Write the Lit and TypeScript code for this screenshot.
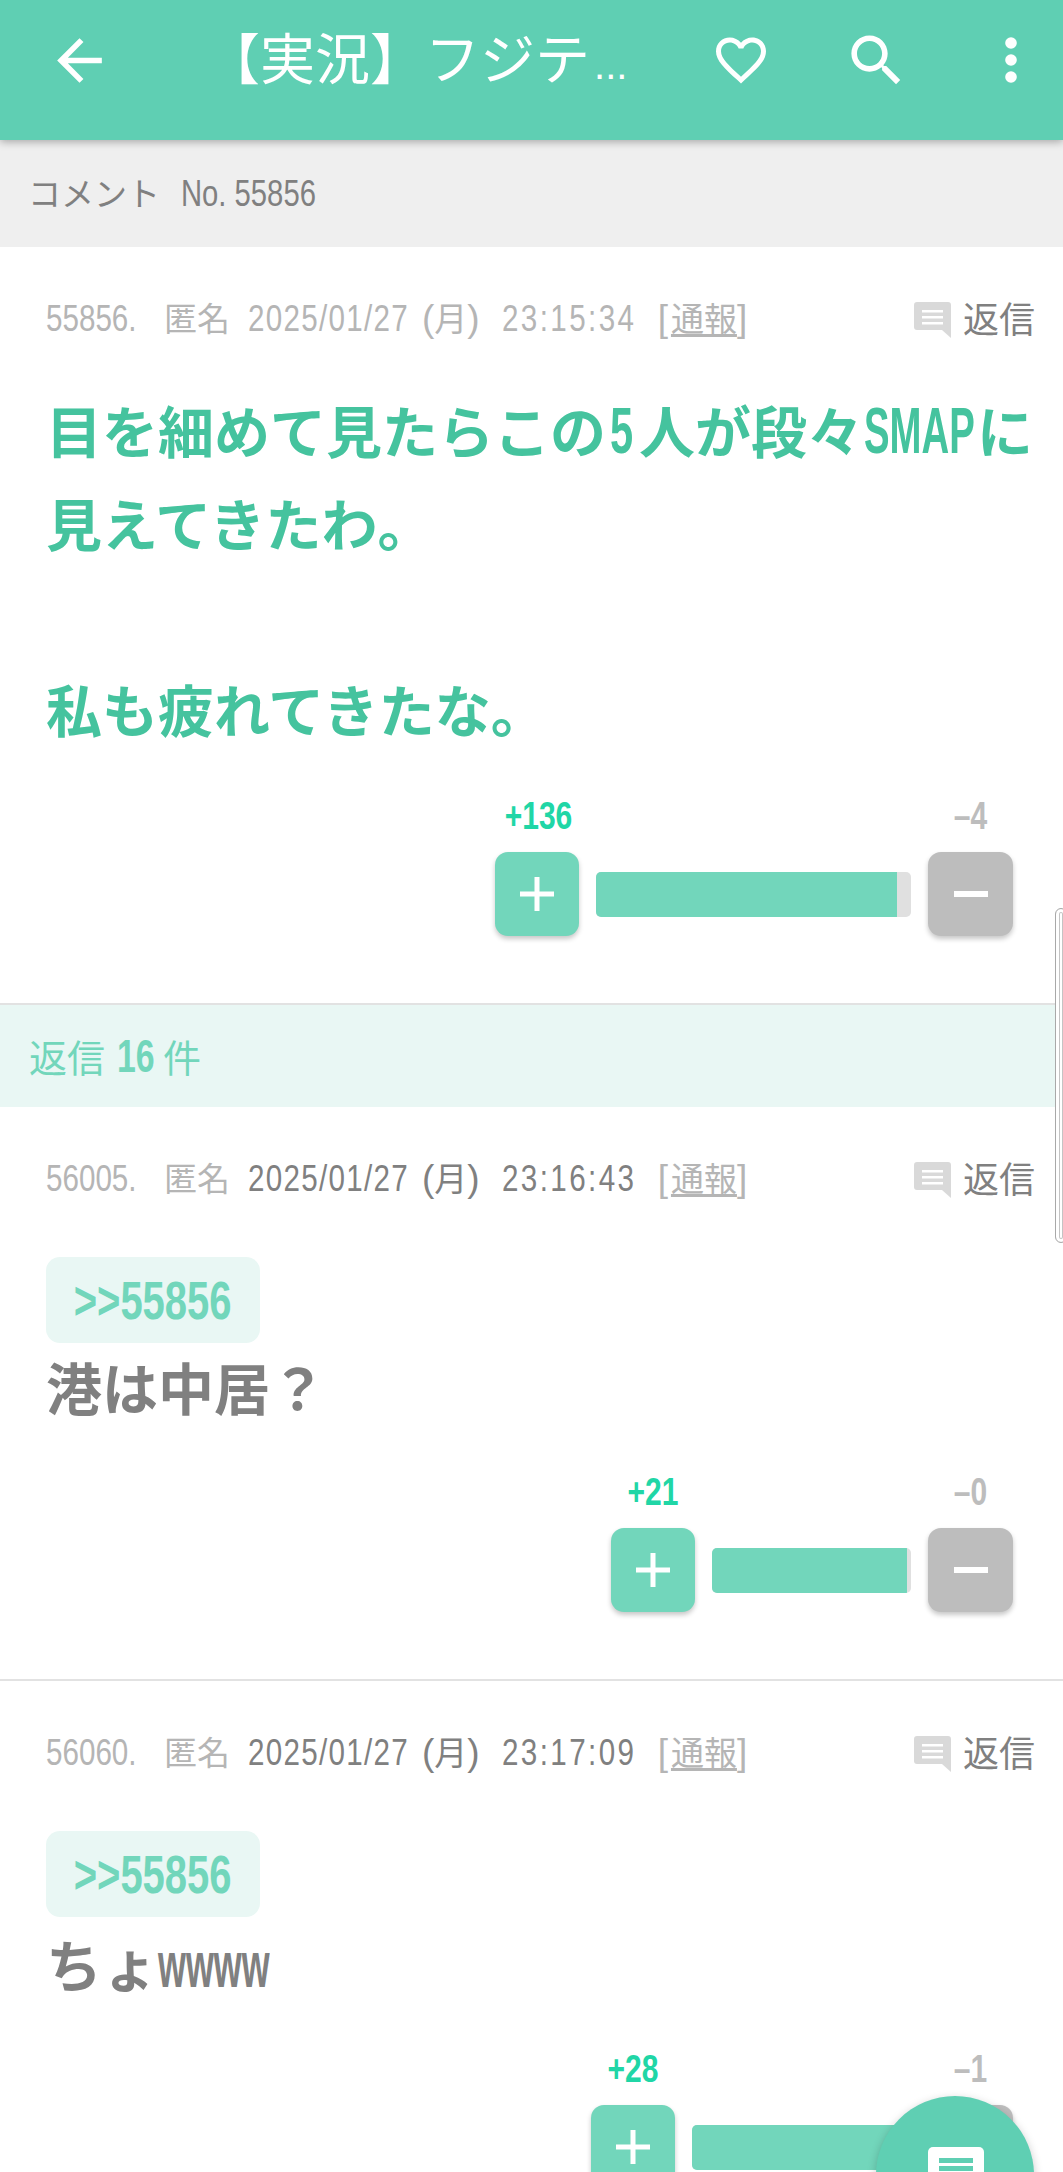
import { LitElement, html, css } from 'lit';
import { customElement } from 'lit/decorators.js';

interface Comment {
  no: string;
  time: string;
  darkDate: boolean;
  anchor?: string;
  body: unknown;
  up: number;
  down: number;
  barWidth: number;
  fillPct: number;
}

const COMMENTS: Comment[] = [
  {
    no: '56005',
    time: '23:16:43',
    darkDate: true,
    anchor: '>>55856',
    body: html`港は中居？`,
    up: 21,
    down: 0,
    barWidth: 199,
    fillPct: 98,
  },
  {
    no: '56060',
    time: '23:17:09',
    darkDate: true,
    anchor: '>>55856',
    body: html`ちょ<span class="sq www">wwww</span>`,
    up: 28,
    down: 1,
    barWidth: 219,
    fillPct: 97,
  },
];

@customElement('app-root')
export class AppRoot extends LitElement {
  static styles = css`
    :host {
      display: block;
      position: relative;
      width: 1063px;
      height: 2172px;
      overflow: hidden;
      background: #fff;
      font-family: 'Noto Sans CJK JP', sans-serif;
      color: #808080;
    }
    .lat {
      font-family: 'Liberation Sans', sans-serif;
    }
    /* the latin text in the reference is very condensed, no narrow font here */
    .nar {
      display: inline-block;
      white-space: nowrap;
      transform-origin: 0 50%;
      transform: scaleX(0.8);
    }
    header {
      position: relative;
      z-index: 2;
      display: flex;
      align-items: center;
      height: 120px;
      padding: 0 0 20px 46px;
      background: #5fcfb3;
      box-shadow: 0 2px 8px rgba(0, 0, 0, 0.3);
      color: #fff;
    }
    header svg {
      display: block;
      fill: #fff;
      flex: none;
    }
    .title {
      width: 433px;
      margin: 0 73px 0 92px;
      font-size: 55px;
      line-height: 80px;
      white-space: nowrap;
    }
    .title .lat {
      font-size: 40px;
      margin-left: 4px;
    }
    .search {
      margin: 0 89px 0 72px;
    }
    .sub {
      height: 107px;
      padding-left: 28px;
      background: #efefef;
      font-size: 33px;
      line-height: 105px;
    }
    .sub .nar {
      font-size: 37px;
      width: 134px;
      margin-left: 21px;
      transform: scaleX(0.79);
    }
    .item {
      padding: 45px 0 67px 46px;
      border-bottom: 2px solid #e2e2e2;
    }
    .meta {
      display: flex;
      align-items: baseline;
      height: 50px;
      padding-right: 28px;
      font-size: 33px;
      line-height: 50px;
      color: #b5b5b5;
      white-space: nowrap;
    }
    .meta .lat {
      font-size: 37px;
    }
    .meta .no {
      width: 91px;
    }
    .meta .name {
      margin-left: 27px;
    }
    .meta .date {
      margin-left: 18px;
    }
    .meta .stamp {
      width: 174px;
      letter-spacing: 1.6px;
    }
    .meta .dark {
      color: #808080;
    }
    .meta .clock {
      width: 132px;
      margin-left: 22px;
      letter-spacing: 3px;
    }
    .meta .report {
      margin-left: 24px;
    }
    .meta .report u {
      margin-left: 3px;
      text-underline-offset: 3px;
    }
    .reply {
      display: flex;
      align-items: center;
      gap: 12px;
      align-self: center;
      margin-left: auto;
      font-size: 36px;
      line-height: 44px;
      color: #808080;
    }
    .reply svg {
      display: block;
      margin-top: 5px;
    }
    .body {
      margin: 40px 0 0;
      font-size: 56px;
      line-height: 93px;
      font-weight: 700;
      white-space: nowrap;
    }
    .first .body {
      color: #45c39e;
    }
    .sq {
      display: inline-block;
      font-family: 'Liberation Sans', sans-serif;
      font-weight: 700;
      line-height: 1;
      transform-origin: left;
    }
    .five {
      font-size: 65px;
      width: 29px;
      margin-left: 4px;
      transform: scaleX(0.64);
    }
    .smap {
      font-size: 65px;
      width: 113px;
      margin-left: 1px;
      transform: scaleX(0.59);
    }
    .www {
      font-size: 64px;
      width: 114px;
      transform: scaleX(0.56);
    }
    .anchor {
      display: inline-flex;
      align-items: center;
      justify-content: center;
      box-sizing: border-box;
      width: 214px;
      height: 86px;
      margin-top: 55px;
      border-radius: 14px;
      background: #e9f7f4;
      color: #72d6bb;
      font-size: 54px;
      font-weight: 700;
    }
    .anchor span {
      display: block;
      transform: scaleX(0.74);
    }
    .anchor + .body {
      margin-top: -4px;
    }
    .item:last-of-type .body {
      margin-top: -1px;
    }
    .votes {
      display: grid;
      grid-template-columns: 84px auto 85px;
      column-gap: 17px;
      justify-content: end;
      align-items: center;
      margin-top: 24px;
      padding-right: 50px;
    }
    .first .votes {
      margin-top: 26px;
    }
    .count {
      height: 72px;
      font-size: 39px;
      line-height: 72px;
      font-weight: 700;
      text-align: center;
      transform: scaleX(0.77);
    }
    .count.up {
      color: #20d6a6;
      grid-column: 1;
    }
    .count.down {
      color: #bdbdbd;
      grid-column: 3;
    }
    .btn {
      display: flex;
      align-items: center;
      justify-content: center;
      height: 84px;
      border-radius: 13px;
      box-shadow: 0 3px 5px rgba(0, 0, 0, 0.22);
    }
    .btn.plus {
      background: #72d6bb;
    }
    .btn.minus {
      background: #bdbdbd;
    }
    .btn svg {
      display: block;
      fill: #fff;
    }
    .bar {
      height: 45px;
      border-radius: 5px;
      background: #e0e0e0;
      overflow: hidden;
    }
    .fill {
      height: 100%;
      background: #72d6bb;
    }
    .replies {
      height: 102px;
      padding-left: 29px;
      background: #e9f7f4;
      color: #72d6bb;
      font-size: 38px;
      line-height: 102px;
    }
    .replies .nar {
      font-size: 47px;
      font-weight: 700;
      width: 37px;
      margin: 0 9px 0 12px;
      transform: scaleX(0.72);
    }
    .rail {
      position: absolute;
      left: 1055px;
      top: 908px;
      width: 12px;
      height: 335px;
      box-sizing: border-box;
      border: 1.5px solid #a9a9a9;
      border-radius: 7px;
      box-shadow: inset 0 0 0 3px #fff, inset 0 0 0 4px #c4c4c4;
      background: #fff;
    }
    .fab {
      position: absolute;
      left: 876px;
      top: 2096px;
      z-index: 3;
      width: 158px;
      height: 158px;
      border-radius: 50%;
      background: #5fcfb3;
      box-shadow: 0 3px 10px rgba(0, 0, 0, 0.22);
    }
    .fab svg {
      position: absolute;
      left: 52px;
      top: 51px;
      display: block;
    }
  `;

  private _meta(no: string, time: string, dark: boolean) {
    return html`
      <div class="meta">
        <span class="lat nar no">${no}.</span>
        <span class="name">匿名</span>
        <span class="date ${dark ? 'dark' : ''}"><span class="lat nar stamp">2025/01/27</span><span class="lat">(</span>月<span class="lat">)</span></span>
        <span class="lat nar clock ${dark ? 'dark' : ''}">${time}</span>
        <span class="report"><span class="lat">[</span><u>通報</u><span class="lat">]</span></span>
        <span class="reply">
          <svg width="37" height="36" viewBox="0 0 37 36">
            <path fill="#d9d9d9" d="M3 0h31a3 3 0 0 1 3 3v33l-9-8H3a3 3 0 0 1-3-3V3a3 3 0 0 1 3-3z" />
            <path fill="#fff" d="M8 8h21v2.6H8zM8 14h21v2.6H8zM8 20h21v2.6H8z" />
          </svg>
          返信
        </span>
      </div>
    `;
  }

  private _votes(up: number, down: number, barWidth: number, fillPct: number) {
    return html`
      <div class="votes">
        <div class="count up lat">+${up}</div>
        <div class="count down lat">–${down}</div>
        <div class="btn plus">
          <svg width="34" height="34" viewBox="0 0 34 34"><path d="M14.5 0h5v14.5H34v5H19.5V34h-5V19.5H0v-5h14.5z" /></svg>
        </div>
        <div class="bar" style="width:${barWidth}px">
          <div class="fill" style="width:${fillPct}%"></div>
        </div>
        <div class="btn minus">
          <svg width="34" height="6" viewBox="0 0 34 6"><path d="M0 0h34v6H0z" /></svg>
        </div>
      </div>
    `;
  }

  render() {
    return html`
      <header>
        <svg width="67" height="67" viewBox="0 0 24 24">
          <path d="M20 11H7.83l5.59-5.59L12 4l-8 8 8 8 1.41-1.41L7.83 13H20v-2z" />
        </svg>
        <div class="title">【実況】フジテ<span class="lat">...</span></div>
        <svg width="60" height="60" viewBox="0 0 24 24">
          <path d="M16.5 3c-1.74 0-3.41.81-4.5 2.09C10.91 3.81 9.24 3 7.5 3 4.42 3 2 5.42 2 8.5c0 3.78 3.4 6.86 8.55 11.54L12 21.35l1.45-1.32C18.6 15.36 22 12.28 22 8.5 22 5.42 19.58 3 16.5 3zm-4.4 15.55l-.1.1-.1-.1C7.14 14.24 4 11.39 4 8.5 4 6.5 5.5 5 7.5 5c1.54 0 3.04.99 3.57 2.36h1.87C13.46 5.99 14.96 5 16.5 5c2 0 3.5 1.5 3.5 3.5 0 2.89-3.14 5.74-7.9 10.05z" />
        </svg>
        <svg class="search" width="67" height="67" viewBox="0 0 24 24">
          <path d="M15.5 14h-.79l-.28-.27C15.41 12.59 16 11.11 16 9.5 16 5.91 13.09 3 9.5 3S3 5.91 3 9.5 5.91 16 9.5 16c1.61 0 3.09-.59 4.23-1.57l.27.28v.79l5 4.99L20.49 19l-4.99-5zm-6 0C7.01 14 5 11.99 5 9.5S7.01 5 9.5 5 14 7.01 14 9.5 11.99 14 9.5 14z" />
        </svg>
        <svg width="24" height="60" viewBox="0 0 24 60">
          <circle cx="12" cy="13" r="5.8" />
          <circle cx="12" cy="30" r="5.8" />
          <circle cx="12" cy="47" r="5.8" />
        </svg>
      </header>

      <div class="sub">コメント<span class="lat nar">No. 55856</span></div>

      <section class="item first">
        ${this._meta('55856', '23:15:34', false)}
        <div class="body">
          目を細めて見たらこの<span class="sq five">5</span>人が段々<span class="sq smap">SMAP</span>に<br />
          見えてきたわ。<br />
          <br />
          私も疲れてきたな。
        </div>
        ${this._votes(136, 4, 315, 95.6)}
      </section>

      <div class="replies">返信<span class="lat nar">16</span>件</div>

      ${COMMENTS.map(
        (c) => html`
          <section class="item">
            ${this._meta(c.no, c.time, c.darkDate)}
            <div class="anchor lat"><span>${c.anchor}</span></div>
            <div class="body">${c.body}</div>
            ${this._votes(c.up, c.down, c.barWidth, c.fillPct)}
          </section>
        `
      )}

      <div class="rail"></div>
      <div class="fab">
        <svg width="56" height="56" viewBox="0 0 56 56">
          <rect width="56" height="56" rx="5" fill="#fff" />
          <path fill="#5fcfb3" d="M11 11h34v5H11zM11 19h34v5H11z" />
        </svg>
      </div>
    `;
  }
}
